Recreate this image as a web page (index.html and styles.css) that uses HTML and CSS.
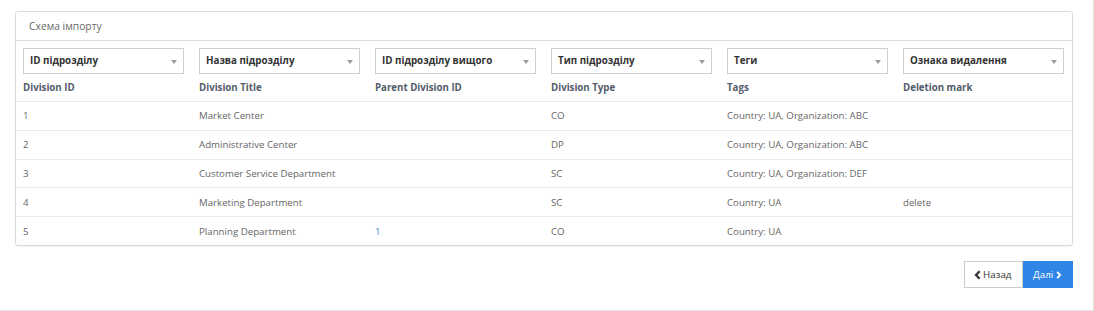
FILE: index.html
```html
<!DOCTYPE html>
<html>
<head>
<meta charset="utf-8">
<link rel="stylesheet" href="styles.css">
</head>
<body>
<div class="page">
  <div class="panel">
    <div class="panel-heading">Схема імпорту</div>
    <table class="grid">
      <thead>
        <tr>
          <th><div class="select">ID підрозділу<span class="caret"></span></div><div class="label">Division ID</div></th>
          <th><div class="select">Назва підрозділу<span class="caret"></span></div><div class="label">Division Title</div></th>
          <th><div class="select">ID підрозділу вищого<span class="caret"></span></div><div class="label">Parent Division ID</div></th>
          <th><div class="select">Тип підрозділу<span class="caret"></span></div><div class="label">Division Type</div></th>
          <th><div class="select">Теги<span class="caret"></span></div><div class="label">Tags</div></th>
          <th><div class="select">Ознака видалення<span class="caret"></span></div><div class="label">Deletion mark</div></th>
        </tr>
      </thead>
      <tbody>
        <tr><td>1</td><td>Market Center</td><td></td><td>CO</td><td>Country: UA, Organization: ABC</td><td></td></tr>
        <tr><td>2</td><td>Administrative Center</td><td></td><td>DP</td><td>Country: UA, Organization: ABC</td><td></td></tr>
        <tr><td>3</td><td>Customer Service Department</td><td></td><td>SC</td><td>Country: UA, Organization: DEF</td><td></td></tr>
        <tr><td>4</td><td>Marketing Department</td><td></td><td>SC</td><td>Country: UA</td><td>delete</td></tr>
        <tr><td>5</td><td>Planning Department</td><td class="num">1</td><td>CO</td><td>Country: UA</td><td></td></tr>
      </tbody>
    </table>
  </div>
  <div class="actions">
    <button class="btn btn-default"><svg class="chev" width="7" height="10" viewBox="0 0 7 10"><path d="M5.6 1.2 L2 5 L5.6 8.8" fill="none" stroke="currentColor" stroke-width="2.3"/></svg>Назад</button>
    <button class="btn btn-primary">Далі<svg class="chev chev-r" width="7" height="10" viewBox="0 0 7 10"><path d="M1.4 1.2 L5 5 L1.4 8.8" fill="none" stroke="currentColor" stroke-width="2.3"/></svg></button>
  </div>
</div>
</body>
</html>
```
FILE: styles.css
```css
* { box-sizing: border-box; }
html, body { margin: 0; padding: 0; background: #fff; }
body {
  font-family: "Open Sans", "Noto Sans", sans-serif;
  font-size: 9.7px;
  color: #666;
}
.page {
  width: 1094px;
  height: 311px;
  border-right: 1px solid #e3e3e3;
  border-bottom: 1px solid #e3e3e3;
  padding: 11px 20px 0 15px;
}
.panel {
  border: 1px solid #dcdcdc;
  border-radius: 3px;
  box-shadow: 0 1px 1px rgba(0,0,0,0.06);
}
.panel-heading {
  height: 29px;
  line-height: 28px;
  padding-left: 13px;
  border-bottom: 1px solid #dcdcdc;
  color: #6a6a6a;
  font-size: 10.3px;
}
.grid {
  width: 100%;
  border-collapse: collapse;
  table-layout: fixed;
}
.grid th {
  text-align: left;
  font-weight: 700;
  padding: 7px 8px 6px 7px;
  border-bottom: 1px solid #e6e9ee;
  vertical-align: top;
  color: #535c6b;
}
.select {
  position: relative;
  height: 26px;
  border: 1px solid #cfcfcf;
  line-height: 24px;
  padding-left: 6px;
  color: #333;
  font-weight: 700;
  font-size: 9.8px;
  margin-bottom: 7px;
}
.caret {
  position: absolute;
  right: 6px;
  top: 11px;
  width: 0;
  height: 0;
  border-left: 3px solid transparent;
  border-right: 3px solid transparent;
  border-top: 4px solid #9a9a9a;
}
.label {
  height: 14px;
  line-height: 14px;
}
.grid td {
  height: 28.75px;
  padding: 0 8px 0 7px;
  border-top: 1px solid #e8edf3;
  vertical-align: middle;
  white-space: nowrap;
  color: #666;
}
.grid td.num { color: #4a8ad0; }
.grid tbody tr:first-child td { border-top: none; }
.actions {
  display: flex;
  justify-content: flex-end;
  margin-top: 15px;
}
.btn {
  height: 27px;
  font-family: "Open Sans", "Noto Sans", sans-serif;
  font-size: 9.8px;
  border: 1px solid #cccccc;
  display: flex;
  align-items: center;
  padding: 0 10px;
  cursor: pointer;
}
.btn-default {
  background: #fff;
  color: #333;
  width: 59px;
  padding-left: 9px;
}
.btn-primary {
  background: #2f86e6;
  border-color: #2f86e6;
  color: #fff;
  width: 50px;
  padding-left: 9px;
}
.chev { margin-right: 2px; }
.chev-r { margin-left: 3px; margin-right: 0; }
```
